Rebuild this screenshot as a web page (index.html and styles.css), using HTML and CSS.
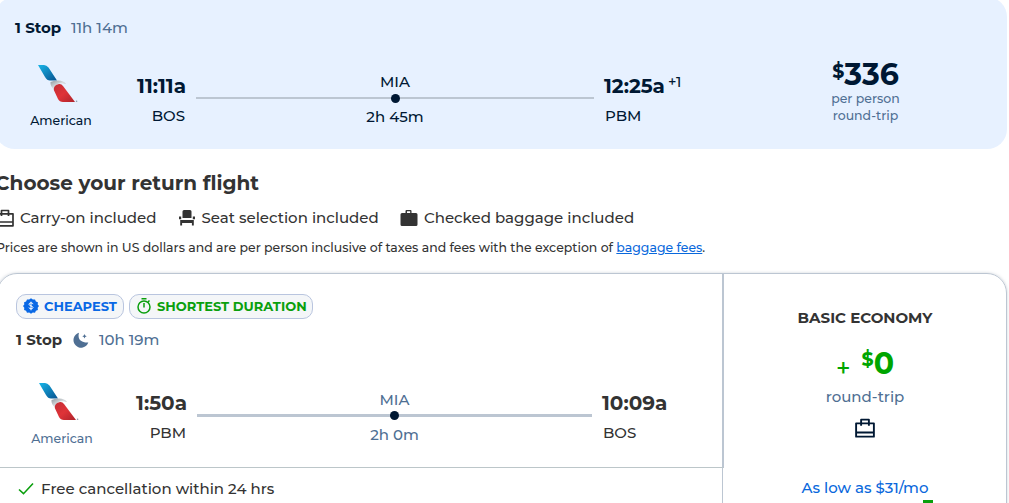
FILE: index.html
```html
<!DOCTYPE html>
<html lang="en">
<head>
<meta charset="utf-8">
<title>Choose your return flight</title>
<link rel="stylesheet" href="styles.css">
</head>
<body>
<svg class="defs" width="0" height="0" aria-hidden="true">
  <defs>
    <linearGradient id="blue" x1="0" y1="0" x2="1" y2="1"><stop offset="0" stop-color="#18b5e8"/><stop offset="1" stop-color="#07528f"/></linearGradient>
    <linearGradient id="red" x1="0" y1="0" x2="1" y2="1"><stop offset="0" stop-color="#c22d35"/><stop offset=".5" stop-color="#df3338"/><stop offset="1" stop-color="#ad232b"/></linearGradient>
    <linearGradient id="silver" x1="0" y1="0" x2="1" y2="1"><stop offset="0" stop-color="#8f999f"/><stop offset=".5" stop-color="#d8dcdf"/><stop offset="1" stop-color="#aeb6ba"/></linearGradient>
    <symbol id="airline" viewBox="0 0 40 38">
      <path fill="url(#blue)" d="M0 0H6Q8.500 0 10.500 2.500L19 15.500H12Q9 15.500 7 12Z"/>
      <path fill="url(#silver)" d="M12.500 17Q15 15.500 20 15.500Q26 15.500 28 19Q23 17.500 19.500 19Q16.500 21 16 24.500Q12 21 12.500 17Z"/>
      <path fill="url(#red)" d="M15.800 25Q15.500 20 21 19Q23.500 18.700 25 21L37 37H25Q21.500 37 20 34Z"/>
      <circle cx="38.600" cy="36.200" r=".8" fill="#8a98a5"/>
    </symbol>
    <symbol id="carry" viewBox="0 0 18 18">
      <path fill="none" stroke="currentColor" stroke-width="1.700" stroke-linejoin="round" d="M1 4.800H17V16.800H1ZM1 13H17M5.500 7V1.500H12.500V7"/>
    </symbol>
  </defs>
</svg>
<main class="page">
  <section class="outbound">
    <div class="summary"><b class="stops">1 Stop</b><span class="duration">11h 14m</span></div>
    <div class="flight">
      <div class="airline"><svg class="airline-logo"><use href="#airline"/></svg><span class="airline-name">American</span></div>
      <div class="place depart"><b class="time">11:11a</b><span class="code">BOS</span></div>
      <div class="route"><span class="via">MIA</span><div class="track"><i class="dot"></i></div><span class="layover">2h 45m</span></div>
      <div class="place arrive"><div class="time-row"><b class="time">12:25a</b><sup class="next-day">+1</sup></div><span class="code">PBM</span></div>
      <div class="price-box"><div class="price"><span class="currency">$</span><span class="amount">336</span></div><span class="price-note">per person</span><span class="price-note">round-trip</span></div>
    </div>
  </section>
  <section class="intro">
    <h1 class="title">Choose your return flight</h1>
    <div class="perks">
      <span class="perk perk-carry"><svg class="perk-icon"><use href="#carry"/></svg><span>Carry-on included</span></span>
      <span class="perk perk-seat"><svg class="perk-icon" viewBox="0 0 18 18"><path fill="currentColor" d="M6 1h6q1.500 0 1.500 1.500V9h-9V2.500Q4.500 1 6 1zM1 7.500h2.200v2.700H1zM14.800 7.500H17v2.700h-2.200zM2.200 11h13.600v5.500h-1.900V14H4.100v2.500H2.200z"/></svg><span>Seat selection included</span></span>
      <span class="perk"><svg class="perk-icon" viewBox="0 0 18 18"><path fill="currentColor" fill-rule="evenodd" d="M5.500 4V2Q5.500 1 6.500 1h4q1 0 1 1v2H16q1.500 0 1.500 1.500v10Q17.500 17 16 17H2Q.5 17 .5 15.500v-10Q.5 4 2 4zM7 4h3.200V2.300H7z"/></svg><span>Checked baggage included</span></span>
    </div>
    <p class="fine">Prices are shown in US dollars and are per person inclusive of taxes and fees with the exception of <a class="fees">baggage fees</a>.</p>
  </section>
  <section class="result">
    <div class="itinerary">
      <div class="details">
        <div class="badges">
          <span class="badge cheapest"><svg class="badge-icon" viewBox="0 0 16 16"><path fill="currentColor" d="M8 .3l1.800 1.300 2.200-.2.900 2 2 .9-.2 2.200L16 8l-1.300 1.700.2 2.200-2 .9-.9 2-2.200-.2L8 15.800l-1.800-1.200-2.200.2-.9-2-2-.9.200-2.200L0 8l1.300-1.500-.2-2.200 2-.9.900-2 2.200.2z"/><path fill="none" stroke="#fff" d="M10 6.200C10 4.500 6 4.400 6 6.300S10 7.700 10 9.500s-4 1.800-4 0M8 3.700v8.600"/></svg><span>CHEAPEST</span></span>
          <span class="badge shortest"><svg class="badge-icon" viewBox="0 0 16 16"><g fill="none" stroke="currentColor" stroke-width="1.500"><circle cx="8" cy="9" r="6"/><path d="M5.500.8h5M8 5v4.500M12 4l1.500-1.500"/></g></svg><span>SHORTEST DURATION</span></span>
        </div>
        <div class="summary"><b class="stops">1 Stop</b><svg class="moon" viewBox="0 0 16 16"><path fill="currentColor" d="M6 .8C4 8 9 11 15.300 10.500A7.600 7.600 0 1 1 6 .8zM11.500 2l.7 1.500 1.500.7-1.500.7-.7 1.500-.7-1.500-1.500-.7 1.500-.7z"/></svg><span class="duration">10h 19m</span></div>
        <div class="flight">
          <div class="airline"><svg class="airline-logo"><use href="#airline"/></svg><span class="airline-name">American</span></div>
          <div class="place depart"><b class="time">1:50a</b><span class="code">PBM</span></div>
          <div class="route"><span class="via">MIA</span><div class="track"><i class="dot"></i></div><span class="layover">2h 0m</span></div>
          <div class="place arrive"><b class="time">10:09a</b><span class="code">BOS</span></div>
        </div>
      </div>
      <div class="perk-free"><svg class="check" viewBox="0 0 16 14"><path fill="none" stroke="#0a9f0d" stroke-width="1.600" d="M1 7.500l4.500 4.200L15 1.500"/></svg><span>Free cancellation within 24 hrs</span></div>
    </div>
    <div class="fare">
      <b class="fare-name">BASIC ECONOMY</b>
      <div class="fare-price"><span class="plus">+</span><span class="currency">$</span><span class="amount">0</span></div>
      <span class="trip">round-trip</span>
      <svg class="fare-bag"><use href="#carry"/></svg>
      <span class="monthly">As low as $31/mo</span>
      <div class="select-peek"></div>
    </div>
  </section>
</main>
</body>
</html>
```
FILE: styles.css
```css
* { box-sizing: border-box; }
body { margin: 0; background: #fff; font: 500 15px/20px Montserrat, Inter, "Liberation Sans", sans-serif; color: #333; }
.defs { display: block; }
.page { height: 503px; overflow: hidden; }
.outbound { margin: -3px 2px 0 -5px; height: 152px; padding: 21px 0 0 20px; border-radius: 20px; background: #e7f1ff; color: #001833; }
.summary { display: flex; align-items: center; height: 20px; }
.stops { width: 56px; font-weight: 700; }
.duration { color: #4f6f93; }
.flight { display: grid; grid-template-columns: 92px 79px 398px 92px 1fr; }
.airline { display: flex; flex-direction: column; align-items: center; padding-top: 27px; }
.airline-logo { width: 40px; height: 38px; margin-left: -7px; }
.airline-name { margin-top: 8px; font-size: 12.5px; line-height: 20px; }
.place { display: flex; flex-direction: column; padding-top: 36px; }
.depart { align-items: flex-end; }
.time { font-size: 20px; line-height: 24px; font-weight: 700; }
.code { margin-top: 8px; }
.depart .code { margin-right: 1px; }
.arrive .code { margin-left: 1px; }
.route { display: flex; flex-direction: column; align-items: center; margin-left: 10px; margin-right: -10px; padding-top: 34px; }
.track { display: flex; justify-content: center; align-items: center; width: 100%; height: 2px; margin: 5px 0 8px; background: #bcc6d2; }
.dot { width: 9px; height: 9px; border-radius: 50%; background: #001833; flex: none; }
.arrive { margin-left: 20px; margin-right: -30px; }
.time-row { display: flex; }
.next-day { font-size: 14.5px; line-height: 17px; margin-left: 3px; }
.price-box { display: flex; flex-direction: column; align-items: center; margin-left: 63px; padding-top: 19px; width: 253px; }
.price { display: flex; height: 33px; font-weight: 700; }
.currency { font-size: 19px; line-height: 30px; }
.amount { font-size: 30px; line-height: 36px; }
.price-note { color: #4f6f93; font-size: 12.5px; line-height: 17px; }
.intro { padding-top: 21px; }
.title { margin: 0 0 0 -5px; font-size: 20px; line-height: 26px; }
.perks { display: flex; margin: 12px 0 0 -4px; }
.perk { display: flex; align-items: center; gap: 6px; height: 20px; }
.perk-icon { width: 18px; height: 18px; }
.perk-carry { width: 181.5px; }
.perk-seat { width: 222.5px; }
.fine { margin: 11px 0 0 -4px; font-size: 12.48px; line-height: 18px; white-space: nowrap; }
.fees { color: #0968dc; text-decoration: underline; }
.result { display: flex; margin: 16px 2px 0 -3px; height: 260px; border: 1px solid #bcc6d2; border-radius: 20px; box-shadow: 0 0 3px #9aa4b180; }
.itinerary { width: 726px; flex: none; }
.details { height: 194px; padding: 20px 0 0 18px; border-right: 2px solid #bcc6d2; border-bottom: 1px solid #bcc6c9; }
.badges { display: flex; gap: 5px; }
.badge { display: flex; align-items: center; gap: 5px; height: 25px; padding: 0 0 1px 6px; border: 1px solid #b9c5df; border-radius: 10px; background: #f4f6f8; font-size: 13px; font-weight: 700; }
.cheapest { width: 108px; color: #0968e5; }
.shortest { width: 184px; color: #0a9f0d; }
.badge-icon { width: 16px; height: 16px; }
.details .summary { margin-top: 11px; }
.moon { width: 16px; height: 16px; margin: 0 10px 0 1px; color: #4f6f93; }
.details .airline { padding-top: 33px; }
.details .airline-name, .details .via, .details .layover { color: #4f6f93; }
.details .place { padding-top: 41px; }
.details .route { padding-top: 40px; margin-right: -7px; }
.details .track { height: 3px; margin: 4px 0 8px; }
.details .arrive { margin-left: 17px; }
.perk-free { display: flex; align-items: center; height: 65px; padding: 0 0 24px 20px; gap: 7px; border-right: 1px solid #bcc6d2; margin-right: 1px; }
.check { width: 16px; height: 14px; }
.fare { display: flex; flex-direction: column; align-items: center; flex: 1; padding-top: 34px; }
.fare-name { font-weight: 700; }
.fare-price { display: flex; height: 34px; margin-top: 18px; color: #00a500; font-weight: 700; }
.plus { font-size: 25px; line-height: 44px; font-weight: 500; margin-right: 11px; }
.fare-price .currency { line-height: 28px; }
.fare-price .amount { line-height: 35px; }
.trip { margin-top: 7px; color: #4f6f93; }
.fare-bag { width: 20px; height: 20px; margin-top: 11px; color: #001833; }
.monthly { margin-top: 40px; color: #0968dc; }
.select-peek { width: 10px; height: 6px; margin: 2px 0 0 126px; background: #0a9f0d; }
```
